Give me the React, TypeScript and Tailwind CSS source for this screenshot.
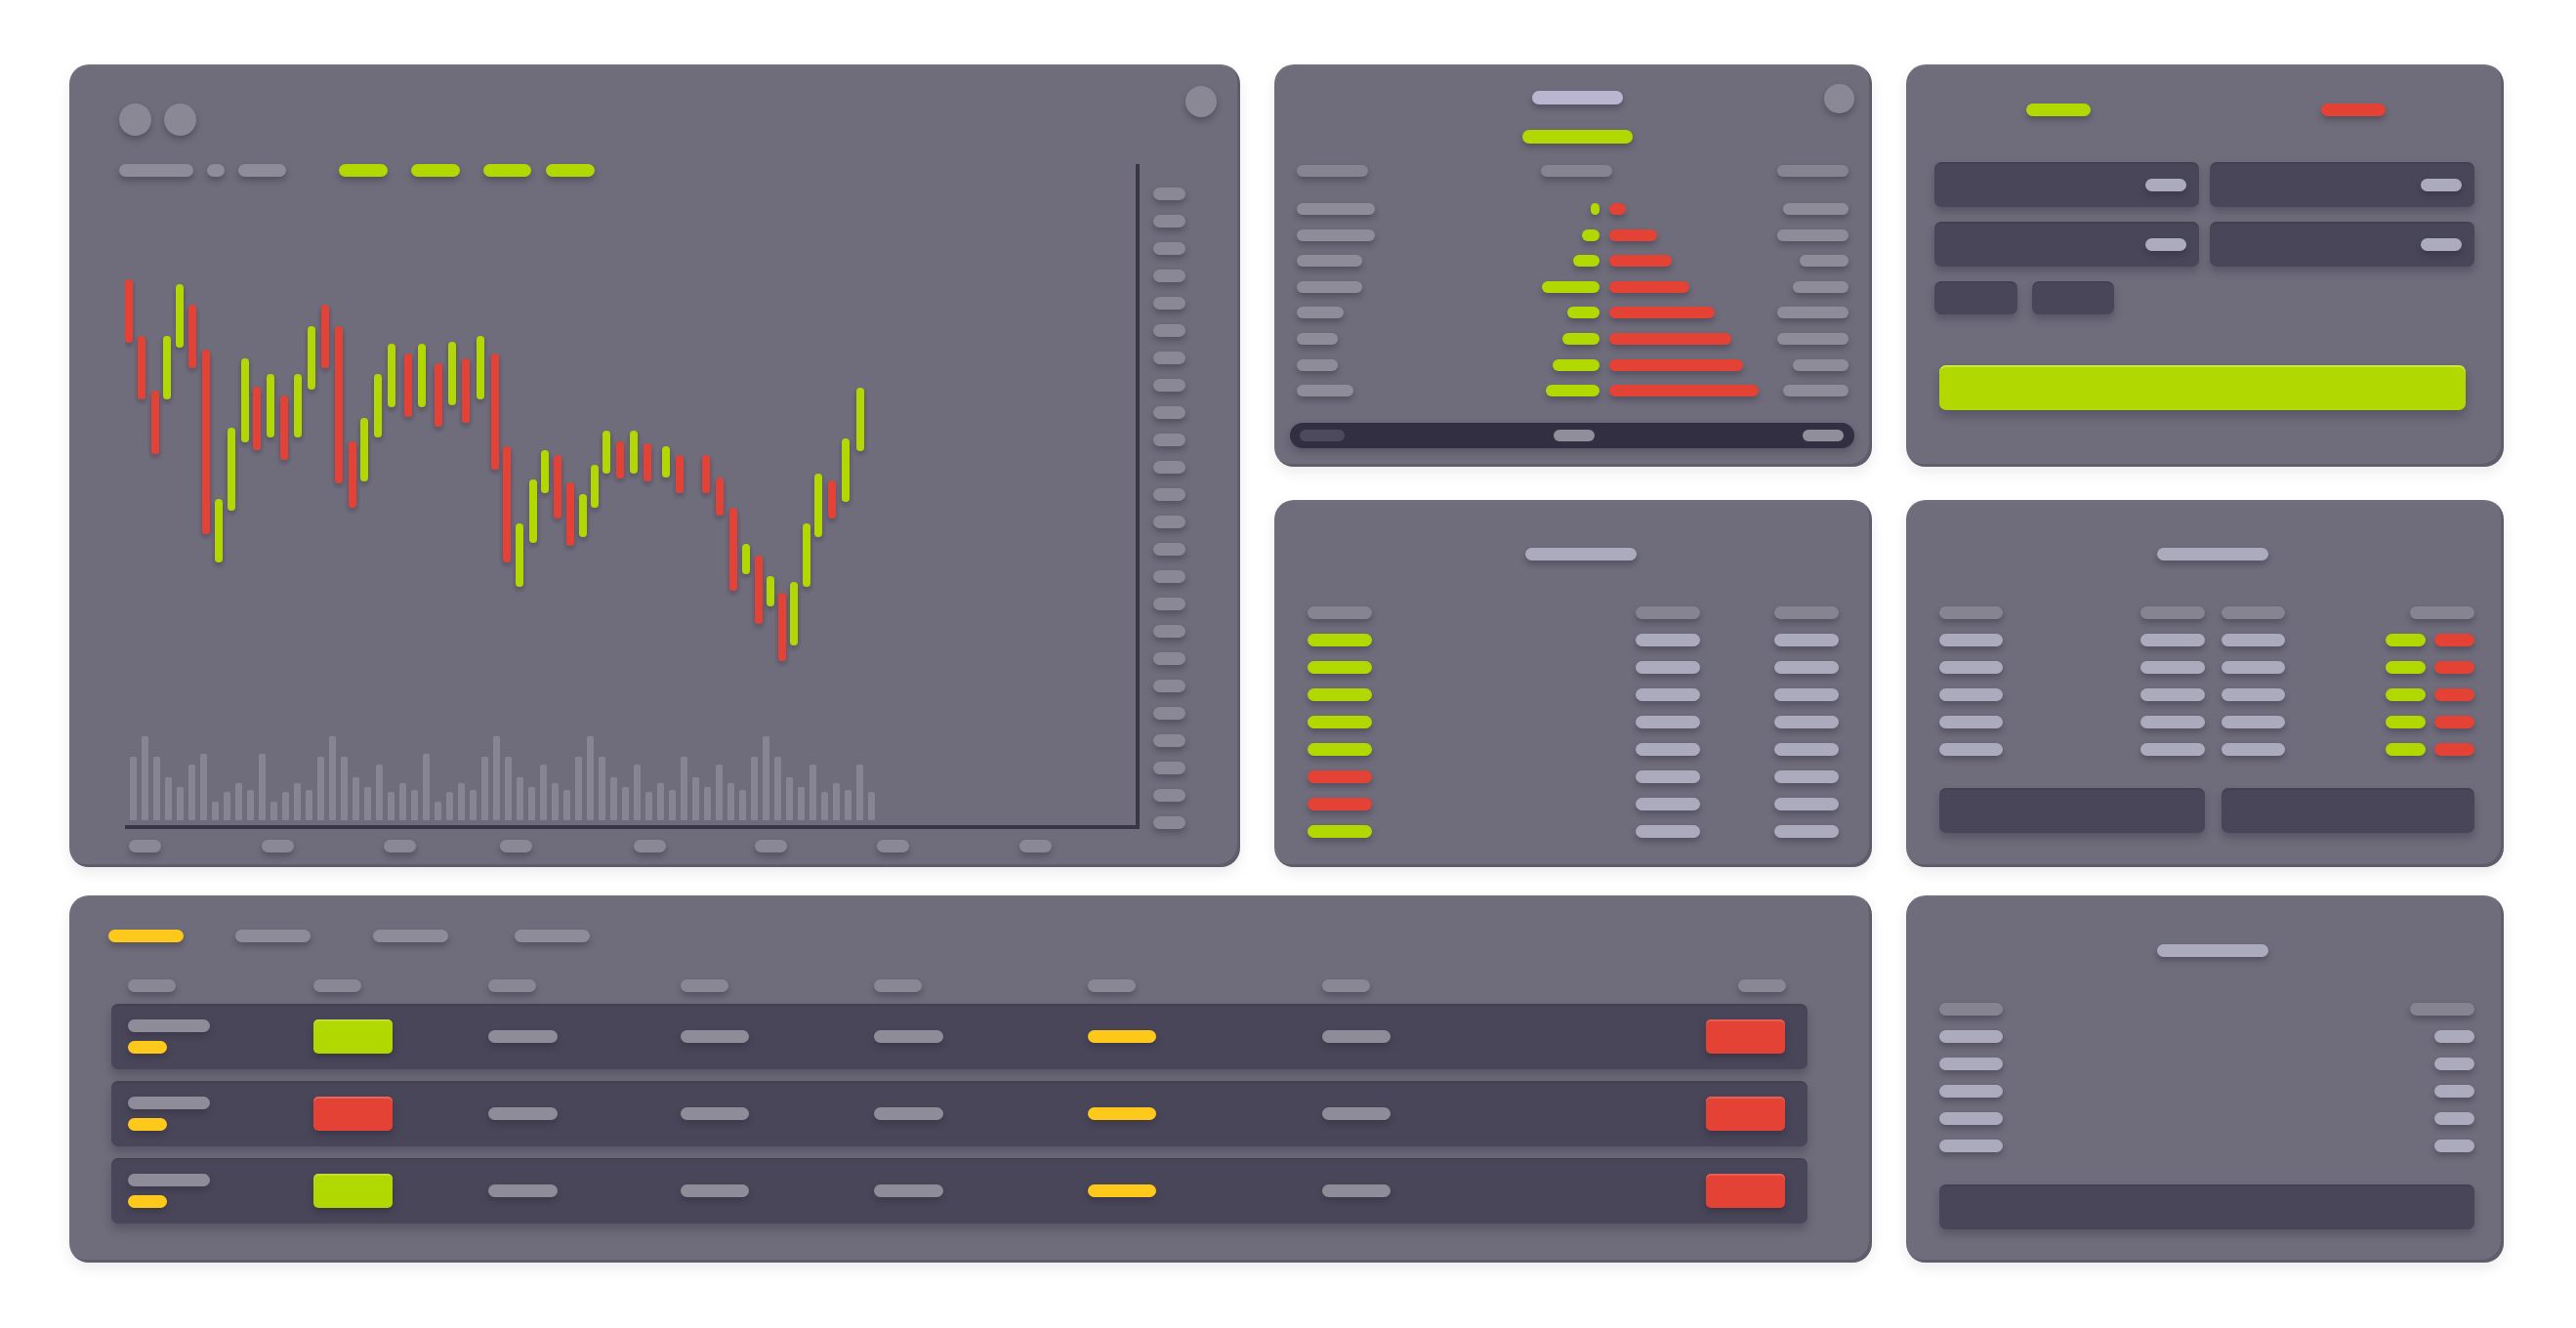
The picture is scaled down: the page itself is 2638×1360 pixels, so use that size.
import React from 'react';

const GREEN = '#b1d800';
const RED = '#e34234';

const sh = 'shadow-[0_4px_6px_rgba(38,34,52,0.35)]';

// x center, top, bottom, up?
const candles: [number, number, number, number][] = [
  [132, 286, 351, 0], [145, 344, 409, 0], [159, 400, 465, 0], [171, 344, 409, 1],
  [184, 291, 356, 1], [197, 312, 377, 0], [211, 358, 547, 0], [224, 511, 576, 1],
  [237, 438, 523, 1], [251, 367, 453, 1], [263, 396, 461, 0], [277, 383, 448, 1],
  [291, 405, 471, 0], [305, 383, 448, 1], [319, 334, 399, 1], [333, 312, 377, 0],
  [347, 334, 495, 0], [361, 452, 520, 0], [373, 428, 493, 1], [387, 383, 448, 1],
  [401, 352, 417, 1], [418, 362, 427, 0], [432, 352, 417, 1], [449, 372, 437, 0],
  [463, 350, 415, 1], [477, 367, 433, 0], [492, 344, 409, 1], [507, 362, 481, 0],
  [519, 457, 576, 0], [532, 536, 601, 1], [546, 491, 556, 1], [558, 461, 505, 1],
  [571, 466, 531, 0], [584, 494, 559, 0], [597, 506, 550, 1], [609, 476, 520, 1],
  [621, 441, 485, 1], [635, 452, 490, 0], [649, 441, 485, 1], [663, 454, 493, 0],
  [682, 457, 489, 1], [696, 466, 505, 0], [723, 466, 505, 0], [737, 489, 528, 0],
  [751, 520, 605, 0], [764, 557, 588, 1], [777, 569, 639, 0], [789, 590, 621, 1],
  [801, 607, 677, 0], [813, 596, 661, 1], [826, 536, 601, 1], [838, 485, 550, 1],
  [852, 492, 531, 0], [866, 449, 514, 1], [881, 397, 462, 1],
];

const volTops = [
  105, 42, 105, 168, 198, 129, 96, 243, 213, 186, 207, 96, 243, 213, 186, 207,
  105, 42, 105, 168, 198, 129, 213, 186, 207, 96, 243, 213, 186, 207, 105, 42,
  105, 168, 198, 129, 186, 207, 105, 42, 105, 168, 198, 129, 213, 186, 207, 105,
  168, 198, 129, 186, 207, 105, 42, 105, 168, 198, 129, 213, 186, 207, 129, 213,
];

const book = [
  { l: 80, g: 9, r: 17, rt: 67 },
  { l: 80, g: 18, r: 49, rt: 73 },
  { l: 67, g: 27, r: 64, rt: 50 },
  { l: 67, g: 59, r: 82, rt: 57 },
  { l: 48, g: 33, r: 108, rt: 73 },
  { l: 42, g: 38, r: 125, rt: 73 },
  { l: 42, g: 48, r: 137, rt: 57 },
  { l: 58, g: 55, r: 153, rt: 67 },
];

const trades = ['g', 'g', 'g', 'g', 'g', 'r', 'r', 'g'];

const Panel: React.FC<{ className?: string; children?: React.ReactNode }> = ({ className = '', children }) => (
  <div
    className={`rounded-[20px] bg-[#6f6c7b] shadow-[inset_-3px_-3px_0_rgba(40,36,56,0.22),inset_0_2px_0_rgba(255,255,255,0.03),0_6px_14px_rgba(0,0,0,0.08)] ${className}`}
  >
    {children}
  </div>
);

const ChartPanel = () => (
  <Panel className="flex h-[822px] w-[1199px] shrink-0 flex-col">
    <div className="flex items-start justify-between pl-[51px] pr-[24px] pt-[22px]">
      <div className="mt-[18px] flex gap-[13px]">
        <div className={`h-[33px] w-[33px] rounded-full bg-[#8b8896] ${sh}`} />
        <div className={`h-[33px] w-[33px] rounded-full bg-[#8b8896] ${sh}`} />
      </div>
      <div className={`h-[32px] w-[32px] rounded-full bg-[#8b8896] ${sh}`} />
    </div>

    <div className="mt-[29px] flex pl-[57px]">
      <div className="flex h-[681px] w-[1039px] flex-col border-b-4 border-r-4 border-[#3a3647]">
        <div className="-ml-[6px] flex h-[13px] items-center">
          <div className={`h-[13px] w-[76px] rounded-full bg-[#8f8c99] ${sh}`} />
          <div className={`ml-[14px] h-[13px] w-[18px] rounded-full bg-[#8f8c99] ${sh}`} />
          <div className={`ml-[14px] h-[13px] w-[49px] rounded-full bg-[#8f8c99] ${sh}`} />
          <div className={`ml-[54px] h-[13px] w-[50px] rounded-full bg-[#b1d800] ${sh}`} />
          <div className={`ml-[24px] h-[13px] w-[50px] rounded-full bg-[#b1d800] ${sh}`} />
          <div className={`ml-[24px] h-[13px] w-[49px] rounded-full bg-[#b1d800] ${sh}`} />
          <div className={`ml-[15px] h-[13px] w-[50px] rounded-full bg-[#b1d800] ${sh}`} />
        </div>
        <svg width={1035} height={663} viewBox="128 181 1035 663" className="block">
          <defs>
            <filter id="cs" x="-100%" y="-20%" width="300%" height="150%">
              <feDropShadow dx="0" dy="3" stdDeviation="2.5" floodColor="#262236" floodOpacity="0.35" />
            </filter>
          </defs>
          <g fill="#878493">
            {volTops.map((t, i) => {
              const h = (300 - t) / 3;
              return <rect key={i} x={133 + 12 * i} y={840 - h} width={7} height={h} rx={1.5} />;
            })}
          </g>
          <g filter="url(#cs)">
            {candles.map(([x, t, b, up], i) => (
              <rect key={i} x={x - 4} y={t} width={8} height={b - t} rx={4} fill={up ? GREEN : RED} />
            ))}
          </g>
        </svg>
      </div>
      <div className="ml-[14px] flex flex-col gap-[15px] pt-[24px]">
        {Array.from({ length: 24 }).map((_, i) => (
          <div key={i} className={`h-[13px] w-[33px] rounded-full bg-[#8b8896] ${sh}`} />
        ))}
      </div>
    </div>

    <div className="mt-[11px] flex pl-[61px]">
      <div className={`h-[13px] w-[33px] rounded-full bg-[#8b8896] ${sh}`} />
      <div className={`ml-[103px] h-[13px] w-[33px] rounded-full bg-[#8b8896] ${sh}`} />
      <div className={`ml-[92px] h-[13px] w-[33px] rounded-full bg-[#8b8896] ${sh}`} />
      <div className={`ml-[86px] h-[13px] w-[33px] rounded-full bg-[#8b8896] ${sh}`} />
      <div className={`ml-[104px] h-[13px] w-[33px] rounded-full bg-[#8b8896] ${sh}`} />
      <div className={`ml-[91px] h-[13px] w-[33px] rounded-full bg-[#8b8896] ${sh}`} />
      <div className={`ml-[92px] h-[13px] w-[33px] rounded-full bg-[#8b8896] ${sh}`} />
      <div className={`ml-[113px] h-[13px] w-[33px] rounded-full bg-[#8b8896] ${sh}`} />
    </div>
  </Panel>
);

const BookPanel = () => (
  <Panel className="flex h-[412px] w-[612px] flex-col">
    <div className="flex items-start pl-[264px] pr-[18px] pt-[20px]">
      <div className={`mt-[7px] h-[14px] w-[93px] rounded-full bg-[#bab6d2] ${sh}`} />
      <div className={`ml-auto h-[30px] w-[31px] rounded-full bg-[#8b8896] ${sh}`} />
    </div>
    <div className="mt-[17px] flex pl-[254px]">
      <div className={`h-[14px] w-[113px] rounded-full bg-[#b1d800] ${sh}`} />
    </div>
    <div className="mt-[22px] flex justify-between pl-[23px] pr-[24px]">
      <div className={`h-[12px] w-[73px] rounded-full bg-[#878492] ${sh}`} />
      <div className={`translate-x-[4px] h-[12px] w-[73px] rounded-full bg-[#878492] ${sh}`} />
      <div className={`h-[12px] w-[73px] rounded-full bg-[#878492] ${sh}`} />
    </div>
    <div className="mt-[27px] flex flex-col gap-[14.6px] pl-[23px] pr-[24px]">
      {book.map((r, i) => (
        <div key={i} className="flex h-[12px] items-center">
          <div className="flex w-[310px] justify-between">
            <div className={`h-[12px] rounded-full bg-[#8f8c99] ${sh}`} style={{ width: r.l }} />
            <div className={`h-[12px] rounded-full bg-[#b1d800] ${sh}`} style={{ width: r.g }} />
          </div>
          <div className="ml-[10px] flex flex-1 justify-between">
            <div className={`h-[12px] rounded-full bg-[#e34234] ${sh}`} style={{ width: r.r }} />
            <div className={`h-[12px] rounded-full bg-[#8f8c99] ${sh}`} style={{ width: r.rt }} />
          </div>
        </div>
      ))}
    </div>
    <div className="ml-[16px] mr-[18px] mt-[27px] flex h-[26px] items-center justify-between rounded-full bg-[#332f42] pl-[10px] pr-[11px] shadow-[0_4px_8px_rgba(38,34,52,0.3)]">
      <div className="h-[12px] w-[46px] rounded-full bg-[#4e4a5e]" />
      <div className="h-[12px] w-[42px] rounded-full bg-[#918e9b]" />
      <div className="h-[12px] w-[42px] rounded-full bg-[#918e9b]" />
    </div>
  </Panel>
);

const Field = () => (
  <div className="flex h-[46px] items-center justify-end rounded-[7px] bg-[#4a4659] pr-[13px] shadow-[inset_0_2px_0_rgba(0,0,0,0.08),0_5px_9px_rgba(38,34,52,0.3)]">
    <div className={`h-[13px] w-[42px] rounded-full bg-[#acaabd] ${sh}`} />
  </div>
);

const FormPanel = () => (
  <Panel className="flex h-[412px] w-[612px] flex-col pl-[29px] pr-[30px] pt-[40px]">
    <div className="flex gap-[236px] pl-[94px]">
      <div className={`h-[13px] w-[66px] rounded-full bg-[#b1d800] ${sh}`} />
      <div className={`h-[13px] w-[66px] rounded-full bg-[#e34234] ${sh}`} />
    </div>
    <div className="mt-[47px] grid grid-cols-2 gap-x-[11px] gap-y-[15px]">
      <Field />
      <Field />
      <Field />
      <Field />
    </div>
    <div className="mt-[15px] flex gap-[15px]">
      <div className="h-[34px] w-[85px] rounded-[7px] bg-[#4a4659] shadow-[inset_0_2px_0_rgba(0,0,0,0.08),0_5px_9px_rgba(38,34,52,0.3)]" />
      <div className="h-[34px] w-[84px] rounded-[7px] bg-[#4a4659] shadow-[inset_0_2px_0_rgba(0,0,0,0.08),0_5px_9px_rgba(38,34,52,0.3)]" />
    </div>
    <div className="ml-[5px] mr-[9px] mt-[52px] h-[46px] rounded-[7px] bg-[#b1d800] shadow-[inset_0_2px_0_rgba(230,255,120,0.5),0_6px_10px_rgba(38,34,52,0.3)]" />
  </Panel>
);

const TradesPanel = () => (
  <Panel className="flex h-[376px] w-[612px] flex-col px-[34px] pt-[49px]">
    <div className="flex justify-center pl-[16px]">
      <div className={`h-[13px] w-[114px] rounded-full bg-[#acaabd] ${sh}`} />
    </div>
    <div className="mt-[47px] flex">
      <div className={`h-[13px] w-[66px] rounded-full bg-[#878492] ${sh}`} />
      <div className={`ml-auto h-[13px] w-[66px] rounded-full bg-[#878492] ${sh}`} />
      <div className={`ml-[76px] h-[13px] w-[66px] rounded-full bg-[#878492] ${sh}`} />
    </div>
    <div className="mt-[14.5px] flex flex-col gap-[15px]">
      {trades.map((t, i) => (
        <div key={i} className="flex">
          <div className={`h-[13px] w-[66px] rounded-full ${t === 'g' ? 'bg-[#b1d800]' : 'bg-[#e34234]'} ${sh}`} />
          <div className={`ml-auto h-[13px] w-[66px] rounded-full bg-[#acaabd] ${sh}`} />
          <div className={`ml-[76px] h-[13px] w-[66px] rounded-full bg-[#acaabd] ${sh}`} />
        </div>
      ))}
    </div>
  </Panel>
);

const PositionsPanel = () => (
  <Panel className="flex h-[376px] w-[612px] flex-col pl-[34px] pr-[30px] pt-[49px]">
    <div className={`ml-[223px] h-[13px] w-[114px] rounded-full bg-[#acaabd] ${sh}`} />
    <div className="mt-[47px] grid grid-cols-[272px_259px] gap-x-[17px]">
      <div className="flex justify-between">
        <div className={`h-[13px] w-[65px] rounded-full bg-[#878492] ${sh}`} />
        <div className={`h-[13px] w-[66px] rounded-full bg-[#878492] ${sh}`} />
      </div>
      <div className="flex justify-between">
        <div className={`h-[13px] w-[65px] rounded-full bg-[#878492] ${sh}`} />
        <div className={`h-[13px] w-[66px] rounded-full bg-[#878492] ${sh}`} />
      </div>
    </div>
    <div className="mt-[14.5px] flex flex-col gap-[15px]">
      {[0, 1, 2, 3, 4].map((i) => (
        <div key={i} className="grid grid-cols-[272px_259px] gap-x-[17px]">
          <div className="flex justify-between">
            <div className={`h-[13px] w-[65px] rounded-full bg-[#acaabd] ${sh}`} />
            <div className={`h-[13px] w-[66px] rounded-full bg-[#acaabd] ${sh}`} />
          </div>
          <div className="flex justify-between">
            <div className={`h-[13px] w-[65px] rounded-full bg-[#acaabd] ${sh}`} />
            <div className="flex gap-[9px]">
              <div className={`h-[13px] w-[41px] rounded-full bg-[#b1d800] ${sh}`} />
              <div className={`h-[13px] w-[41px] rounded-full bg-[#e34234] ${sh}`} />
            </div>
          </div>
        </div>
      ))}
    </div>
    <div className="mt-[33.5px] grid grid-cols-[272px_259px] gap-x-[17px]">
      <div className="h-[46px] rounded-[7px] bg-[#4a4659] shadow-[inset_0_2px_0_rgba(0,0,0,0.08),0_5px_9px_rgba(38,34,52,0.3)]" />
      <div className="h-[46px] rounded-[7px] bg-[#4a4659] shadow-[inset_0_2px_0_rgba(0,0,0,0.08),0_5px_9px_rgba(38,34,52,0.3)]" />
    </div>
  </Panel>
);

const rowGrid = 'grid grid-cols-[190px_179px_197px_198px_219px_240px_1fr_81px] items-center';

const OrdersPanel = () => (
  <Panel className="flex h-[376px] w-[1846px] flex-col pt-[35px]">
    <div className="flex pl-[40px]">
      <div className={`h-[13px] w-[77px] rounded-full bg-[#fec91b] ${sh}`} />
      <div className={`ml-[53px] h-[13px] w-[77px] rounded-full bg-[#8f8c99] ${sh}`} />
      <div className={`ml-[64px] h-[13px] w-[77px] rounded-full bg-[#8f8c99] ${sh}`} />
      <div className={`ml-[68px] h-[13px] w-[77px] rounded-full bg-[#8f8c99] ${sh}`} />
    </div>
    <div className={`ml-[43px] mr-[66px] mt-[38px] pl-[17px] pr-[22px] ${rowGrid}`}>
      {[0, 1, 2, 3, 4, 5, 6].map((i) => (
        <div key={i} className={`h-[13px] w-[49px] rounded-full bg-[#8a8795] ${sh}`} />
      ))}
      <div className={`h-[13px] w-[49px] justify-self-end rounded-full bg-[#8a8795] ${sh}`} />
    </div>
    <div className="ml-[43px] mr-[66px] mt-[12px] flex flex-col gap-[12px]">
      {['g', 'r', 'g'].map((c, i) => (
        <div
          key={i}
          className={`h-[67px] rounded-[7px] bg-[#4a4659] pl-[17px] pr-[23px] shadow-[inset_0_2px_0_rgba(0,0,0,0.08),0_6px_10px_rgba(38,34,52,0.3)] ${rowGrid}`}
        >
          <div className="flex flex-col gap-[9px]">
            <div className={`h-[13px] w-[84px] rounded-full bg-[#8f8c99] ${sh}`} />
            <div className={`h-[13px] w-[40px] rounded-full bg-[#fec91b] ${sh}`} />
          </div>
          <div
            className={`h-[35px] w-[81px] rounded-[5px] shadow-[inset_0_2px_0_rgba(255,255,255,0.2),0_4px_7px_rgba(30,26,44,0.35)] ${
              c === 'g' ? 'bg-[#b1d800]' : 'bg-[#e34234]'
            }`}
          />
          <div className={`h-[13px] w-[71px] rounded-full bg-[#8f8c99] ${sh}`} />
          <div className={`h-[13px] w-[70px] rounded-full bg-[#8f8c99] ${sh}`} />
          <div className={`h-[13px] w-[71px] rounded-full bg-[#8f8c99] ${sh}`} />
          <div className={`h-[13px] w-[70px] rounded-full bg-[#fec91b] ${sh}`} />
          <div className={`h-[13px] w-[70px] rounded-full bg-[#8f8c99] ${sh}`} />
          <div className="h-[35px] w-[81px] rounded-[5px] bg-[#e34234] shadow-[inset_0_2px_0_rgba(255,255,255,0.15),0_4px_7px_rgba(30,26,44,0.35)]" />
        </div>
      ))}
    </div>
  </Panel>
);

const SummaryPanel = () => (
  <Panel className="flex h-[376px] w-[612px] flex-col pl-[34px] pr-[30px] pt-[50px]">
    <div className={`ml-[223px] h-[13px] w-[114px] rounded-full bg-[#acaabd] ${sh}`} />
    <div className="mt-[47px] flex justify-between">
      <div className={`h-[13px] w-[65px] rounded-full bg-[#878492] ${sh}`} />
      <div className={`h-[13px] w-[66px] rounded-full bg-[#878492] ${sh}`} />
    </div>
    <div className="mt-[14.5px] flex flex-col gap-[15px]">
      {[0, 1, 2, 3, 4].map((i) => (
        <div key={i} className="flex justify-between">
          <div className={`h-[13px] w-[65px] rounded-full bg-[#acaabd] ${sh}`} />
          <div className={`h-[13px] w-[41px] rounded-full bg-[#acaabd] ${sh}`} />
        </div>
      ))}
    </div>
    <div className="mt-[33.5px] h-[46px] rounded-[7px] bg-[#4a4659] shadow-[inset_0_2px_0_rgba(0,0,0,0.08),0_5px_9px_rgba(38,34,52,0.3)]" />
  </Panel>
);

const App: React.FC = () => {
  return (
    <div className="min-h-screen w-full bg-white">
      <div className="flex flex-col pl-[71px] pt-[66px]">
        <div className="flex gap-[35px]">
          <ChartPanel />
          <div className="flex flex-col gap-[34px]">
            <div className="flex gap-[35px]">
              <BookPanel />
              <FormPanel />
            </div>
            <div className="flex gap-[35px]">
              <TradesPanel />
              <PositionsPanel />
            </div>
          </div>
        </div>
        <div className="mt-[29px] flex gap-[35px]">
          <OrdersPanel />
          <SummaryPanel />
        </div>
      </div>
    </div>
  );
};

export default App;
